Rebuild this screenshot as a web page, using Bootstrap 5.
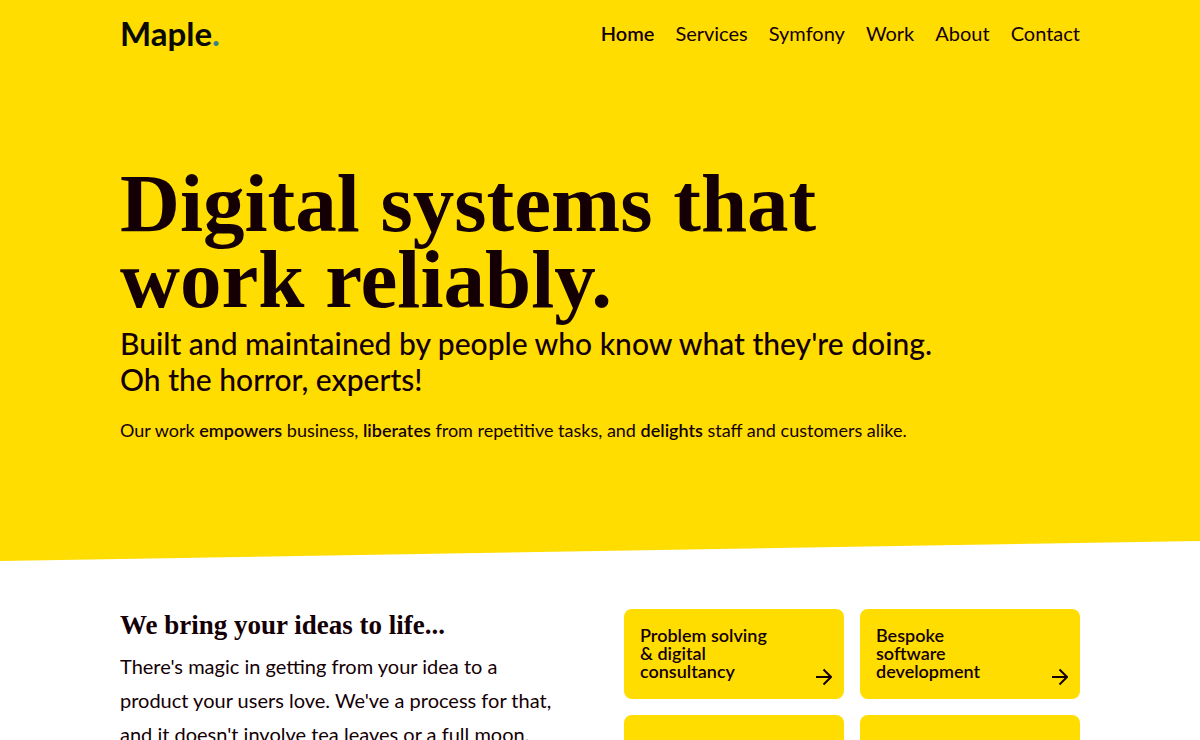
<!DOCTYPE html>
<html lang="en">
<head>
<meta charset="utf-8">
<meta name="viewport" content="width=device-width, initial-scale=1">
<title>Maple.</title>
<link rel="stylesheet" href="https://cdn.jsdelivr.net/npm/bootstrap@5.3.0/dist/css/bootstrap.min.css">
<style>
  :root { --sun: #ffdd00; --ink: #140004; }
  body { font-family: Lato, sans-serif; font-size: 20px; color: var(--ink); background: #fff; }
  .page-width { max-width: 992px; }
  .hero { background: var(--sun); clip-path: polygon(0 0, 100% 0, 100% calc(100% - 20px), 0 100%); padding-bottom: 118px; }
  .site-nav { --bs-navbar-padding-y: 10px; }
  .site-nav .navbar-brand { font-size: 33px; line-height: 46px; font-weight: 700; color: #0a0a00; padding: 0; margin: 0; }
  .brand-dot { color: #3a7f8c; }
  .site-nav .navbar-nav { gap: 21px; }
  .site-nav .nav-link { --bs-navbar-nav-link-padding-x: 0; color: var(--ink); line-height: 24px; padding: 0; }
  .site-nav .nav-link.active { color: var(--ink); font-weight: 600; }
  .serif { font-family: "Liberation Serif", serif; font-weight: 700; }
  .hero-title { font-size: 83px; line-height: 76px; padding-top: 99px; max-width: 800px; }
  .hero-sub { font-size: 30px; line-height: 36px; font-weight: 500; margin-bottom: 20px; }
  .hero-text { font-size: 18px; line-height: 26px; }
  .hero-text strong { font-weight: 600; }
  .ideas-title { font-size: 27px; line-height: 32px; }
  .ideas-text { line-height: 34px; max-width: 440px; }
  .service { background: var(--sun); color: var(--ink); border-radius: 8px; min-height: 90px; padding: 17px 12px 10px 16px; font-size: 18px; line-height: 18px; font-weight: 600; }
  .service-label { max-width: 136px; }
</style>
</head>
<body>
<header class="hero">
  <nav class="navbar navbar-expand site-nav" aria-label="Main">
    <div class="container-fluid page-width px-3">
      <a class="navbar-brand" href="#">Maple<span class="brand-dot">.</span></a>
      <ul class="navbar-nav ms-auto">
        <li class="nav-item"><a class="nav-link active" aria-current="page" href="#">Home</a></li>
        <li class="nav-item"><a class="nav-link" href="#">Services</a></li>
        <li class="nav-item"><a class="nav-link" href="#">Symfony</a></li>
        <li class="nav-item"><a class="nav-link" href="#">Work</a></li>
        <li class="nav-item"><a class="nav-link" href="#">About</a></li>
        <li class="nav-item"><a class="nav-link" href="#">Contact</a></li>
      </ul>
    </div>
  </nav>
  <div class="container-fluid page-width px-3">
    <h1 class="serif hero-title mb-2">Digital systems that work reliably.</h1>
    <p class="hero-sub">Built and maintained by people who know what they're doing.<br>Oh the horror, experts!</p>
    <p class="hero-text mb-0">Our work <strong>empowers</strong> business, <strong>liberates</strong> from repetitive tasks, and <strong>delights</strong> staff and customers alike.</p>
  </div>
</header>
<main class="container-fluid page-width px-3 pt-5 pb-5">
  <div class="row gx-5">
    <section class="col-md-6">
      <h2 class="serif ideas-title mb-2">We bring your ideas to life...</h2>
      <p class="ideas-text">There's magic in getting from your idea to a product your users love. We've a process for that, and it doesn't involve tea leaves or a full moon.</p>
    </section>
    <section class="col-md-6" aria-label="Services">
      <div class="row row-cols-2 g-3">
        <div class="col">
          <a class="service d-flex justify-content-between text-decoration-none" href="#">
            <span class="service-label">Problem solving &amp; digital consultancy</span>
            <svg class="align-self-end flex-shrink-0" width="16" height="24" viewBox="0 0 16 24" fill="none" stroke="currentColor" stroke-width="2" aria-hidden="true"><path d="M0 12h15M7.500 4.500 15 12l-7.500 7.500"/></svg>
          </a>
        </div>
        <div class="col">
          <a class="service d-flex justify-content-between text-decoration-none" href="#">
            <span class="service-label">Bespoke<br>software development</span>
            <svg class="align-self-end flex-shrink-0" width="16" height="24" viewBox="0 0 16 24" fill="none" stroke="currentColor" stroke-width="2" aria-hidden="true"><path d="M0 12h15M7.500 4.500 15 12l-7.500 7.500"/></svg>
          </a>
        </div>
        <div class="col"><div class="service"></div></div>
        <div class="col"><div class="service"></div></div>
      </div>
    </section>
  </div>
</main>
<script src="https://cdn.jsdelivr.net/npm/bootstrap@5.3.0/dist/js/bootstrap.bundle.min.js"></script>
</body>
</html>
